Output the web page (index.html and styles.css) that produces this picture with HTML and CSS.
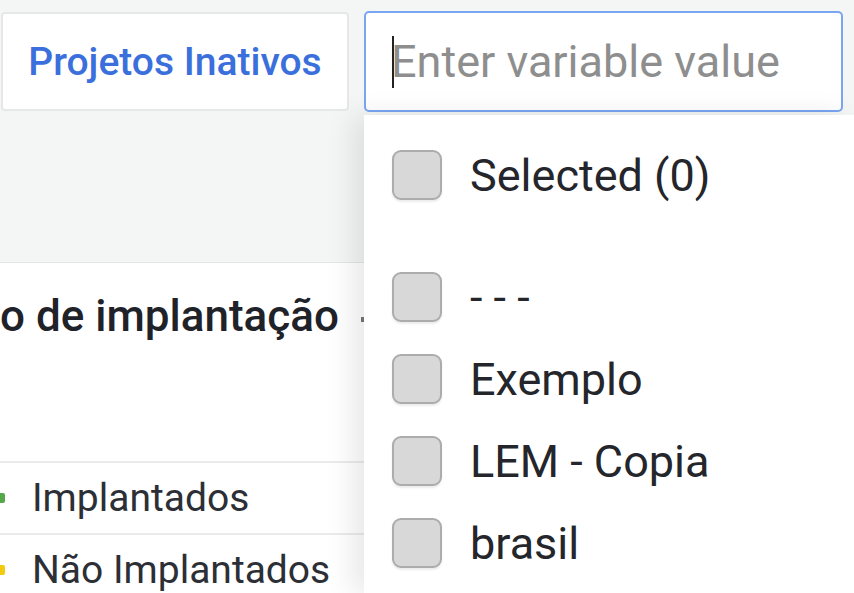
FILE: index.html
```html
<!DOCTYPE html>
<html>
<head>
<meta charset="utf-8">
<link rel="stylesheet" href="styles.css">
</head>
<body>
<div class="toolbar">
  <button class="btn">Projetos Inativos</button>
  <div class="input"><span class="caret"></span><span class="placeholder">Enter variable value</span></div>
</div>
<div class="panel">
  <div class="title">o de implantação<span class="chev"></span></div>
  <div class="legend">
    <div class="lrow"><span class="dot green"></span>Implantados</div>
    <div class="lrow"><span class="dot yellow"></span>Não Implantados</div>
  </div>
</div>
<div class="dropdown">
  <div class="opt sel"><span class="cb"></span>Selected (0)</div>
  <div class="opt first"><span class="cb"></span>- - -</div>
  <div class="opt"><span class="cb"></span>Exemplo</div>
  <div class="opt"><span class="cb"></span>LEM - Copia</div>
  <div class="opt"><span class="cb"></span>brasil</div>
</div>
</body>
</html>
```
FILE: styles.css
```css
html, body { margin: 0; padding: 0; }
body {
  background: #f4f5f5;
  font-family: Roboto, "Liberation Sans", sans-serif;
  width: 854px;
  height: 593px;
  overflow: hidden;
  position: relative;
}
.toolbar {
  display: flex;
  align-items: flex-start;
  gap: 15px;
  padding: 11px 0 0 1px;
}
.btn {
  margin-top: 1px;
  width: 348px;
  height: 99px;
  background: #fff;
  border: 2px solid #e6e7e8;
  border-radius: 4px;
  color: #3a6fdc;
  font-family: Roboto, "Liberation Sans", sans-serif;
  font-weight: 500;
  font-size: 39px;
  padding: 0;
}
.input {
  width: 479px;
  height: 101px;
  box-sizing: border-box;
  border: 2px solid #7aa5f2;
  border-radius: 5px;
  background: #fff;
  display: flex;
  align-items: center;
  padding-left: 26px;
  position: relative;
}
.caret {
  width: 2px;
  height: 52px;
  background: #222;
}
.placeholder {
  color: #8e8e8e;
  font-size: 45px;
  margin-left: -3px;
}
.panel {
  margin-top: 150px;
  width: 364px;
  height: 331px;
  background: #fff;
  border-top: 1px solid #e4e5e6;
}
.title {
  margin-top: 30px;
  height: 46px;
  font-size: 44px;
  font-weight: 500;
  color: #1f2329;
  line-height: 46px;
  white-space: nowrap;
}
.chev {
  display: inline-block;
  margin-left: 22px;
  width: 3px;
  height: 5px;
  background: #777;
  vertical-align: middle;
}
.legend { margin-top: 122px; }
.lrow {
  border-top: 2px solid #ebebeb;
  height: 70px;
  display: flex;
  align-items: center;
  gap: 27px;
  font-size: 39px;
  color: #2c2f35;
}
.dot {
  width: 5px;
  height: 10px;
  border-radius: 0 2px 2px 0;
}
.green { background: #56a64b; }
.yellow { background: #f2cc0c; }
.dropdown {
  position: absolute;
  left: 364px;
  top: 115px;
  right: 0;
  bottom: 0;
  background: #fff;
  box-shadow: -12px 0 26px rgba(0,0,0,0.09);
  padding-top: 35px;
}
.opt {
  display: flex;
  align-items: center;
  gap: 28px;
  padding-left: 28px;
  height: 50px;
  margin-bottom: 32px;
  font-size: 45px;
  color: #24262b;
}
.opt.sel { margin-bottom: 72px; }
.cb {
  width: 46px;
  height: 46px;
  flex: none;
  border: 2px solid #acacac;
  border-radius: 9px;
  background: #d8d8d8;
  box-shadow: 0 2px 2px rgba(0,0,0,0.08);
}
```
